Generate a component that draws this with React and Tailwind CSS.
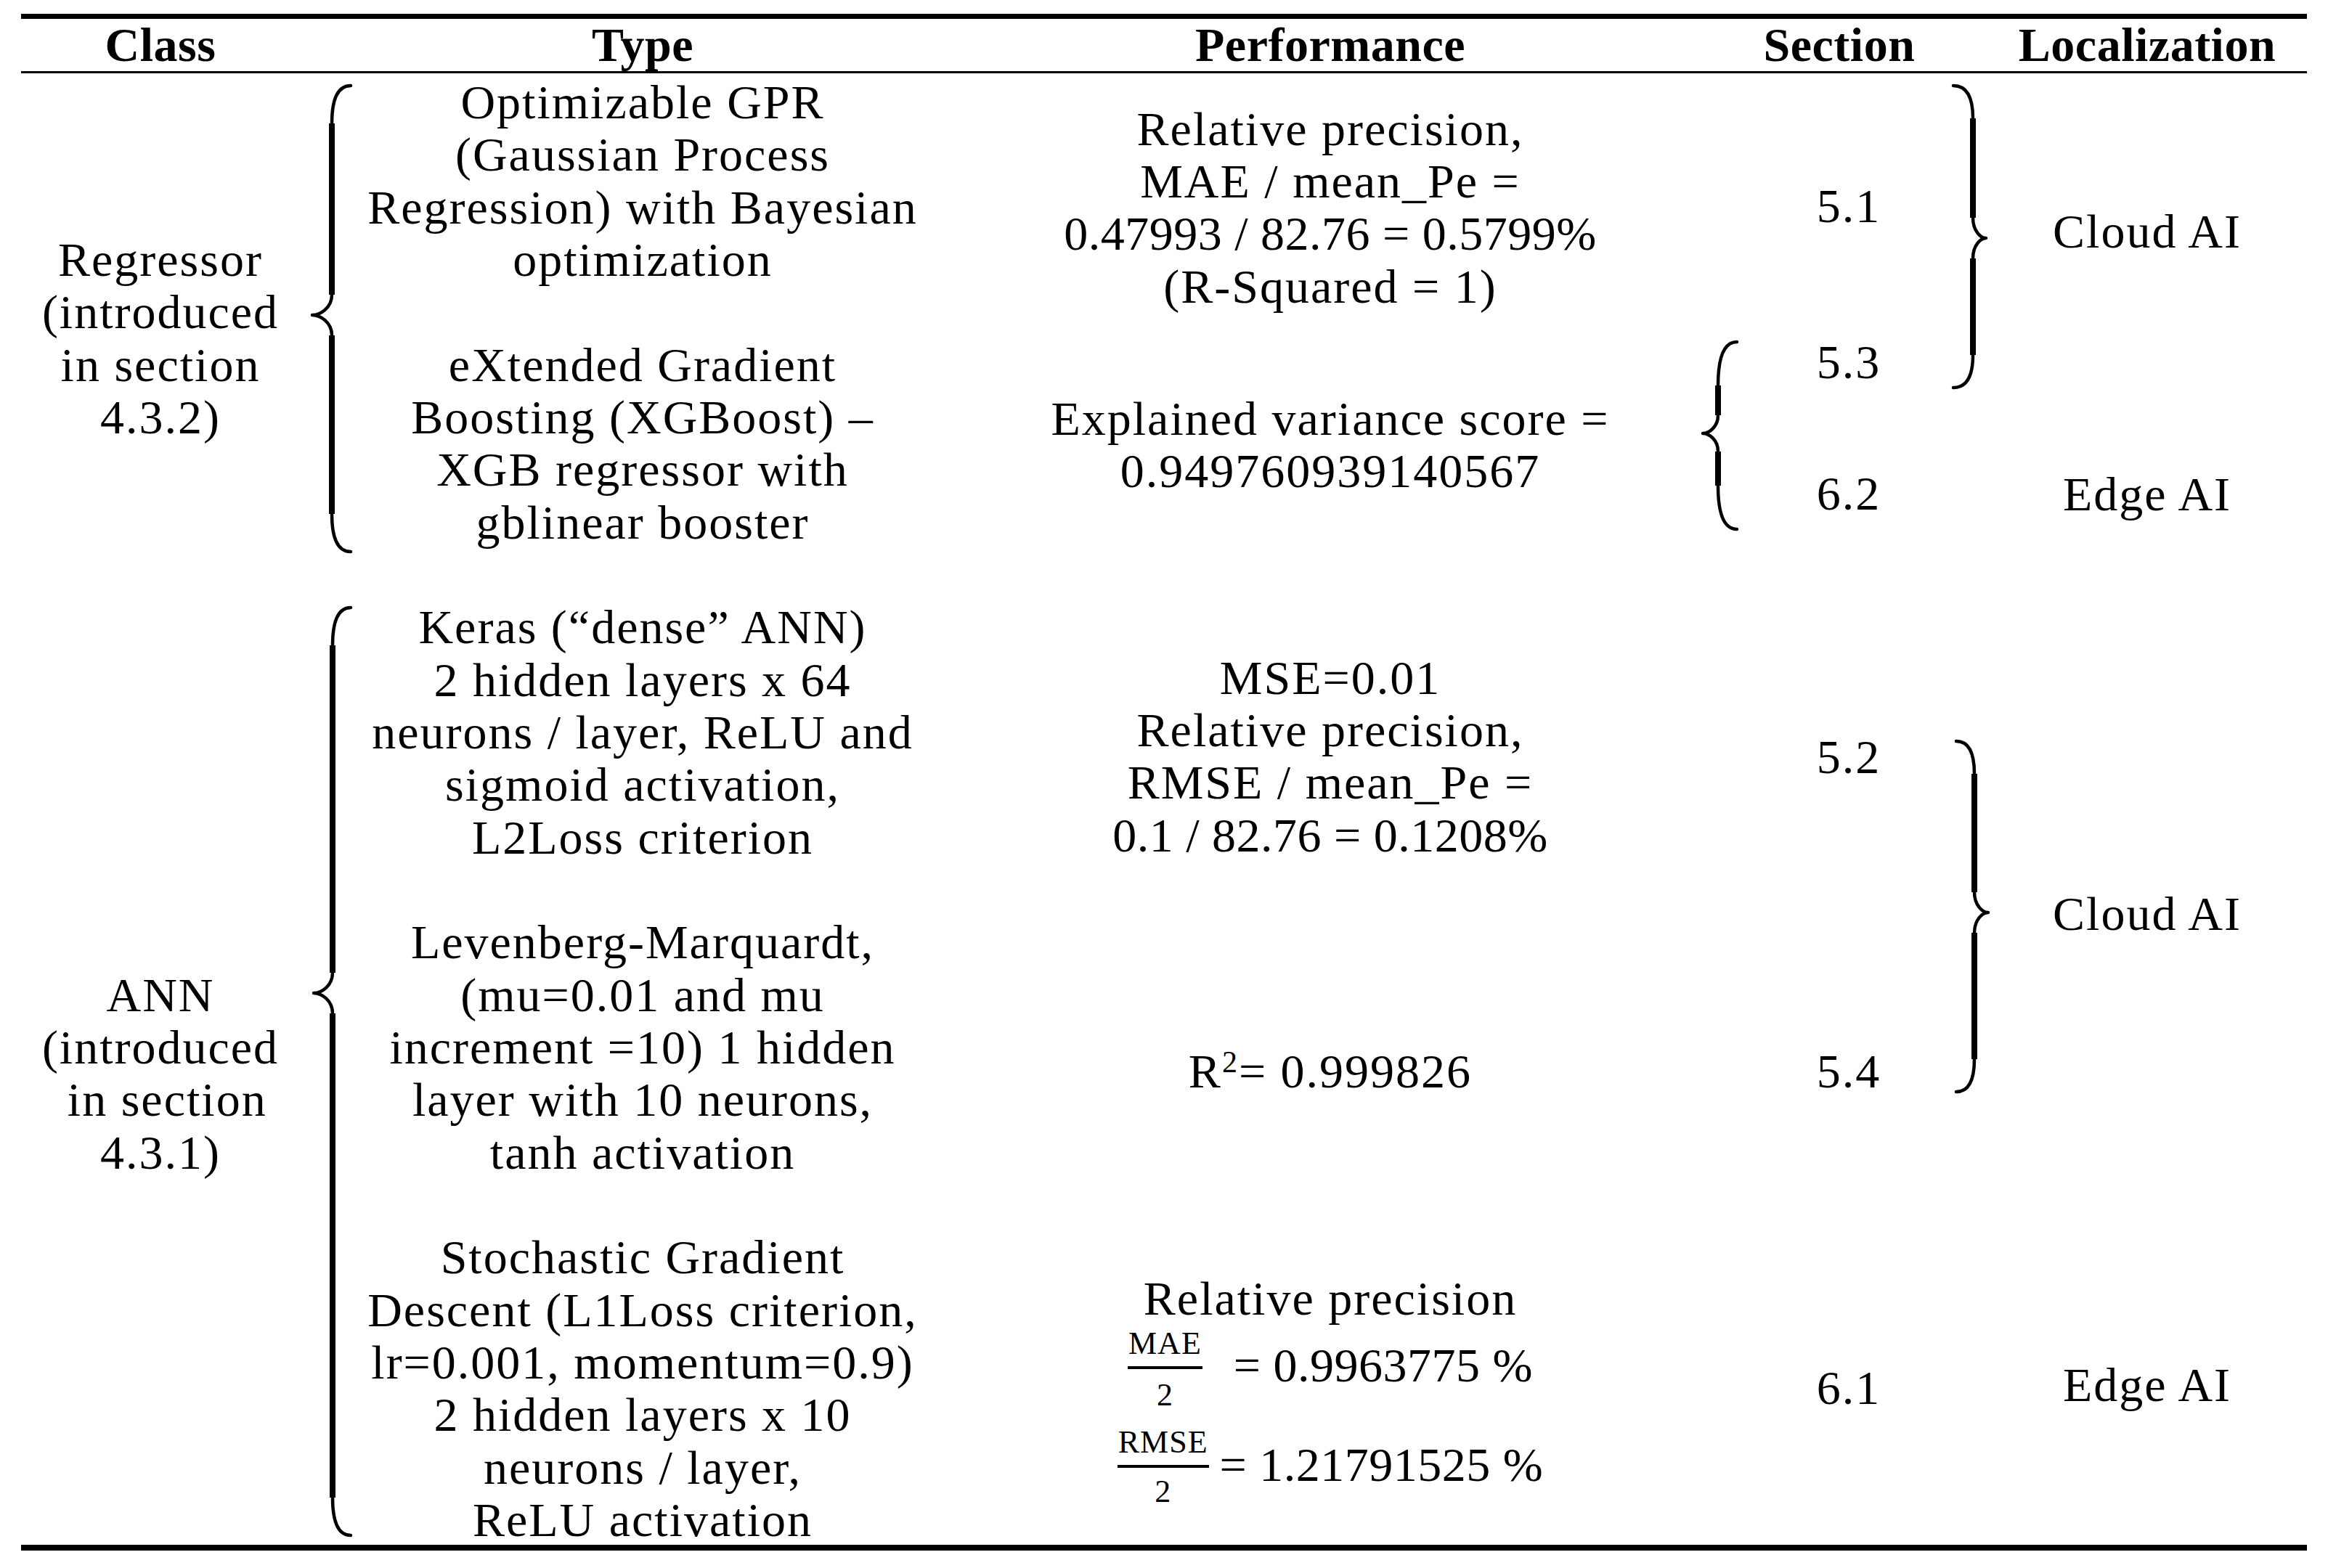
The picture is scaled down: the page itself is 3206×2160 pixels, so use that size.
import React from "react";

const COLS = "grid grid-cols-[384px_87px_770px_1070px_60px_280px_65px_432px]";

function Brace({ w, h, p, tx, sx, px, r = 50, r2 = 28 }) {
  const t = 3;
  const b = h - 3;
  const d = `M${tx} ${t} C${sx + (tx - sx) * 0.3} ${t} ${sx} ${t + r * 0.35} ${sx} ${t + r} L${sx} ${p - r2} C${sx} ${p - r2 * 0.35} ${px + (sx - px) * 0.4} ${p} ${px} ${p} C${px + (sx - px) * 0.4} ${p} ${sx} ${p + r2 * 0.35} ${sx} ${p + r2} L${sx} ${b - r} C${sx} ${b - r * 0.35} ${sx + (tx - sx) * 0.3} ${b} ${tx} ${b}`;
  const stem = `M${sx} ${t + r} L${sx} ${p - r2} M${sx} ${p + r2} L${sx} ${b - r}`;
  return (
    <svg width={w} height={h} viewBox={`0 0 ${w} ${h}`} className="block shrink-0">
      <path d={d} fill="none" stroke="black" strokeWidth="4.5" strokeLinecap="round" strokeLinejoin="round" />
      <path d={stem} fill="none" stroke="black" strokeWidth="8" strokeLinecap="butt" />
    </svg>
  );
}

function Lines({ lines, className = "" }) {
  return (
    <div className={"flex flex-col items-center " + className}>
      {lines.map((l, i) => (
        <div key={i} className="whitespace-nowrap">
          {l}
        </div>
      ))}
    </div>
  );
}

function Frac({ num, gap }) {
  return (
    <div className="flex flex-col items-center text-[44px] leading-[44px] tracking-[1px] shrink-0">
      <div className="whitespace-nowrap px-[1px]">{num}</div>
      <div className="self-stretch h-[4px] bg-black mt-[9px]" />
      <div className={gap}>2</div>
    </div>
  );
}

export default function App() {
  return (
    <div className="w-[3206px] h-[2160px] bg-white text-black font-['Liberation_Serif','Times_New_Roman',serif] pt-[19px] pl-[29px]">
      <div className="w-[3148px] border-t-[7px] border-b-[8px] border-black">
        {/* Header */}
        <div className={COLS + " h-[75px] border-b-[3px] border-black font-bold text-[66px] leading-[72px] tracking-[0.5px]"}>
          <div className="flex justify-center">Class</div>
          <div />
          <div className="flex justify-center">Type</div>
          <div className="flex justify-center pl-[54px]">Performance</div>
          <div />
          <div className="flex justify-center pr-[14px]">Section</div>
          <div />
          <div className="flex justify-center pr-[8px]">Localization</div>
        </div>

        {/* Body */}
        <div className={COLS + " h-[2027px] text-[66px] leading-[72.33px] tracking-[2px]"}>
          {/* Class */}
          <div className="flex flex-col items-center">
            <Lines className="mt-[221px]" lines={["Regressor", "(introduced", "in section", "4.3.2)"]} />
            <Lines className="mt-[723.3px]" lines={["ANN", "(introduced", "\u00a0in section", "4.3.1)"]} />
          </div>

          {/* Left braces */}
          <div className="flex flex-col">
            <div className="mt-[14px]">
              <Brace w={87} h={648} p={319} tx={70} sx={44} px={17} r={52} r2={28} />
            </div>
            <div className="mt-[71px]">
              <Brace w={87} h={1284} p={534} tx={70} sx={45} px={19} r={52} r2={28} />
            </div>
          </div>

          {/* Type */}
          <div className="flex flex-col items-center pt-[4px]">
            <Lines className="mb-[72.33px]" lines={["Optimizable GPR", "(Gaussian Process", "Regression) with Bayesian", "optimization"]} />
            <Lines className="mb-[72.33px]" lines={["eXtended Gradient", "Boosting (XGBoost) \u2013", "XGB regressor with", "gblinear booster"]} />
            <Lines
              className="mb-[72.33px]"
              lines={["Keras (\u201cdense\u201d ANN)", "2 hidden layers x 64", "neurons / layer, ReLU and", "sigmoid activation,", "L2Loss criterion"]}
            />
            <Lines
              className="mb-[72.33px]"
              lines={["Levenberg-Marquardt,", "(mu=0.01 and mu", "increment =10) 1 hidden", "layer with 10 neurons,", "tanh activation"]}
            />
            <Lines
              lines={["Stochastic Gradient", "Descent (L1Loss criterion,", "lr=0.001, momentum=0.9)", "2 hidden layers x 10", "neurons / layer,", "ReLU activation"]}
            />
          </div>

          {/* Performance */}
          <div className="flex flex-col items-center pl-[54px]">
            <div className="mt-[40.8px] flex flex-col items-center">
              <div className="whitespace-nowrap">Relative precision,</div>
              <div className="whitespace-nowrap">MAE / mean_Pe =</div>
              <div className="whitespace-nowrap tracking-[0.5px]">0.47993 / 82.76 = 0.5799%</div>
              <div className="whitespace-nowrap">(R-Squared = 1)</div>
            </div>
            <Lines className="mt-[109.7px]" lines={["Explained variance score =", "0.949760939140567"]} />
            <div className="mt-[212.3px] flex flex-col items-center">
              <div className="whitespace-nowrap">MSE=0.01</div>
              <div className="whitespace-nowrap">Relative precision,</div>
              <div className="whitespace-nowrap">RMSE / mean_Pe =</div>
              <div className="whitespace-nowrap tracking-[0.5px]">0.1 / 82.76 = 0.1208%</div>
            </div>
            <div className="mt-[252.7px] whitespace-nowrap">
              R<sup className="text-[42px]">2</sup>= 0.999826
            </div>
            <div className="mt-[240.7px] whitespace-nowrap">Relative precision</div>
            <div className="mt-[4px] flex items-center">
              <Frac num="MAE" gap="mt-[14px]" />
              <div className="ml-[43px] mb-[11px] whitespace-nowrap tracking-[0.5px]">= 0.9963775 %</div>
            </div>
            <div className="mt-[21px] flex items-center">
              <Frac num="RMSE" gap="mt-[11px]" />
              <div className="ml-[15px] mb-[6px] whitespace-nowrap tracking-[0.5px]">= 1.21791525 %</div>
            </div>
          </div>

          {/* Section brace */}
          <div className="flex flex-col">
            <div className="mt-[367px]">
              <Brace w={60} h={264} p={129} tx={52} sx={26} px={5} r={60} r2={25} />
            </div>
          </div>

          {/* Section */}
          <div className="flex flex-col items-center pl-[12px]">
            <div className="mt-[146.8px]">5.1</div>
            <div className="mt-[143.2px]">5.3</div>
            <div className="mt-[108.2px]">6.2</div>
            <div className="mt-[290.7px]">5.2</div>
            <div className="mt-[360.7px]">5.4</div>
            <div className="mt-[363.7px]">6.1</div>
          </div>

          {/* Right braces */}
          <div className="flex flex-col">
            <div className="mt-[14px]">
              <Brace w={65} h={422} p={213} tx={10} sx={37} px={55} r={45} r2={28} />
            </div>
            <div className="mt-[481px]">
              <Brace w={65} h={489} p={239} tx={14} sx={39} px={58} r={45} r2={28} />
            </div>
          </div>

          {/* Localization */}
          <div className="flex flex-col items-center pr-[8px]">
            <div className="mt-[181.8px] whitespace-nowrap">Cloud AI</div>
            <div className="mt-[289.7px] whitespace-nowrap">Edge AI</div>
            <div className="mt-[505.7px] whitespace-nowrap">Cloud AI</div>
            <div className="mt-[576.7px] whitespace-nowrap">Edge AI</div>
          </div>
        </div>
      </div>
    </div>
  );
}
